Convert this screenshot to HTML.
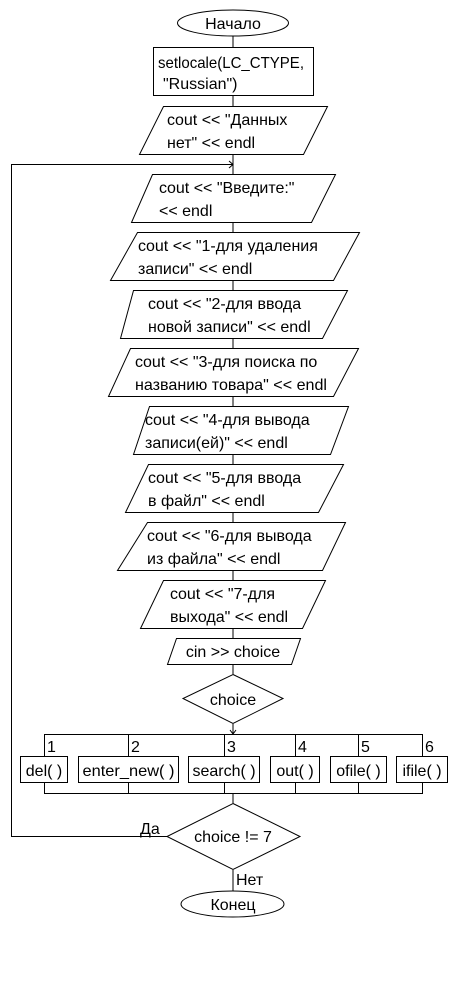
<!DOCTYPE html>
<html><head><meta charset="utf-8"><style>
html,body{margin:0;padding:0;background:#fff;}
svg{display:block}
text{font-family:"Liberation Sans","DejaVu Sans",sans-serif;font-size:16px;fill:#000}
</style></head><body>
<svg width="458" height="1006" viewBox="0 0 458 1006" xmlns="http://www.w3.org/2000/svg">
<g fill="none" stroke="#000" stroke-width="1">
<ellipse cx="233" cy="23" rx="55.5" ry="13"/>
<line x1="233" y1="36" x2="233" y2="47"/>
<rect x="153.5" y="47.5" width="160" height="48"/>
<line x1="233" y1="96" x2="233" y2="106"/>
<polygon points="163.5,106.5 327.5,106.5 303.5,154.5 139.5,154.5"/>
<line x1="233" y1="155" x2="233" y2="174"/>
<polyline points="233,164.5 11.5,164.5 11.5,836.5 167,836.5"/>
<polyline points="229,161 233,164.5 229,168"/>
<polygon points="152.5,174.5 335.5,174.5 311.5,222.5 131.5,222.5"/>
<line x1="233" y1="223" x2="233" y2="232"/>
<polygon points="137.5,232.5 359.5,232.5 333.5,280.5 110.5,280.5"/>
<line x1="233" y1="281" x2="233" y2="290"/>
<polygon points="133.5,290.5 347.5,290.5 322.5,338.5 120.5,338.5"/>
<line x1="233" y1="339" x2="233" y2="348"/>
<polygon points="130.5,348.5 358.5,348.5 333.5,396.5 108.5,396.5"/>
<line x1="233" y1="397" x2="233" y2="406"/>
<polygon points="149.5,406.5 348.5,406.5 330.5,454.5 133.5,454.5"/>
<line x1="233" y1="455" x2="233" y2="464"/>
<polygon points="148.5,464.5 343.5,464.5 318.5,512.5 125.5,512.5"/>
<line x1="233" y1="513" x2="233" y2="522"/>
<polygon points="147.5,522.5 345.5,522.5 322.5,570.5 117.5,570.5"/>
<line x1="233" y1="571" x2="233" y2="580"/>
<polygon points="163.5,580.5 325.5,580.5 302.5,628.5 140.5,628.5"/>
<line x1="233" y1="629" x2="233" y2="638"/>
<polygon points="176.5,638.5 300.5,638.5 291.5,664.5 167.5,664.5"/>
<line x1="233" y1="665" x2="233" y2="674"/>
<polygon points="233,674.5 283,698.5 233,723.5 183,698.5"/>
<line x1="233" y1="724" x2="233" y2="734"/>
<polyline points="230,730 233,734 236,730"/>
<line x1="44" y1="734.5" x2="422" y2="734.5"/>
<line x1="44" y1="793.5" x2="422" y2="793.5"/>
<line x1="44.5" y1="734" x2="44.5" y2="794"/>
<line x1="128.5" y1="734" x2="128.5" y2="794"/>
<line x1="224.5" y1="734" x2="224.5" y2="794"/>
<line x1="295.5" y1="734" x2="295.5" y2="794"/>
<line x1="358.5" y1="734" x2="358.5" y2="794"/>
<line x1="422.5" y1="734" x2="422.5" y2="794"/>
<rect x="20.5" y="756.5" width="47" height="26" fill="#fff"/>
<rect x="78.5" y="756.5" width="100" height="26" fill="#fff"/>
<rect x="188.5" y="756.5" width="71" height="26" fill="#fff"/>
<rect x="270.5" y="756.5" width="49" height="26" fill="#fff"/>
<rect x="330.5" y="756.5" width="56" height="26" fill="#fff"/>
<rect x="396.5" y="756.5" width="51" height="26" fill="#fff"/>
<line x1="233" y1="794" x2="233" y2="803"/>
<polygon points="233,803.5 300,836.5 233,869.5 167,836.5"/>
<line x1="233" y1="870" x2="233" y2="891"/>
<ellipse cx="232.5" cy="904" rx="51.5" ry="13"/>
</g>
<text x="233" y="29" text-anchor="middle">Начало</text>
<text x="158" y="68" textLength="146" lengthAdjust="spacingAndGlyphs">setlocale(LC_CTYPE,</text>
<text x="163" y="89">"Russian")</text>
<text x="167" y="125">cout &lt;&lt; "Данных</text>
<text x="167" y="148">нет" &lt;&lt; endl</text>
<text x="159" y="193">cout &lt;&lt; "Введите:"</text>
<text x="159" y="216">&lt;&lt; endl</text>
<text x="138" y="251">cout &lt;&lt; "1-для удаления</text>
<text x="138" y="274">записи" &lt;&lt; endl</text>
<text x="148" y="309">cout &lt;&lt; "2-для ввода</text>
<text x="148" y="332">новой записи" &lt;&lt; endl</text>
<text x="135" y="367">cout &lt;&lt; "3-для поиска по</text>
<text x="135" y="390" textLength="192" lengthAdjust="spacingAndGlyphs">названию товара" &lt;&lt; endl</text>
<text x="145" y="425">cout &lt;&lt; "4-для вывода</text>
<text x="145" y="448">записи(ей)" &lt;&lt; endl</text>
<text x="148" y="483">cout &lt;&lt; "5-для ввода</text>
<text x="148" y="506">в файл" &lt;&lt; endl</text>
<text x="147" y="541">cout &lt;&lt; "6-для вывода</text>
<text x="147" y="564">из файла" &lt;&lt; endl</text>
<text x="170" y="599">cout &lt;&lt; "7-для</text>
<text x="170" y="622">выхода" &lt;&lt; endl</text>
<text x="233" y="657" text-anchor="middle">cin &gt;&gt; choice</text>
<text x="233" y="705" text-anchor="middle">choice</text>
<text x="47" y="752">1</text>
<text x="131" y="752">2</text>
<text x="227" y="752">3</text>
<text x="298" y="752">4</text>
<text x="361" y="752">5</text>
<text x="425" y="752">6</text>
<text x="44" y="776" text-anchor="middle">del( )</text>
<text x="128.5" y="776" text-anchor="middle" textLength="92" lengthAdjust="spacingAndGlyphs">enter_new( )</text>
<text x="224" y="776" text-anchor="middle">search( )</text>
<text x="295" y="776" text-anchor="middle">out( )</text>
<text x="358.5" y="776" text-anchor="middle">ofile( )</text>
<text x="422" y="776" text-anchor="middle">ifile( )</text>
<text x="140" y="834">Да</text>
<text x="233" y="842" text-anchor="middle">choice != 7</text>
<text x="236" y="885">Нет</text>
<text x="233" y="910" text-anchor="middle">Конец</text>
</svg>
</body></html>
